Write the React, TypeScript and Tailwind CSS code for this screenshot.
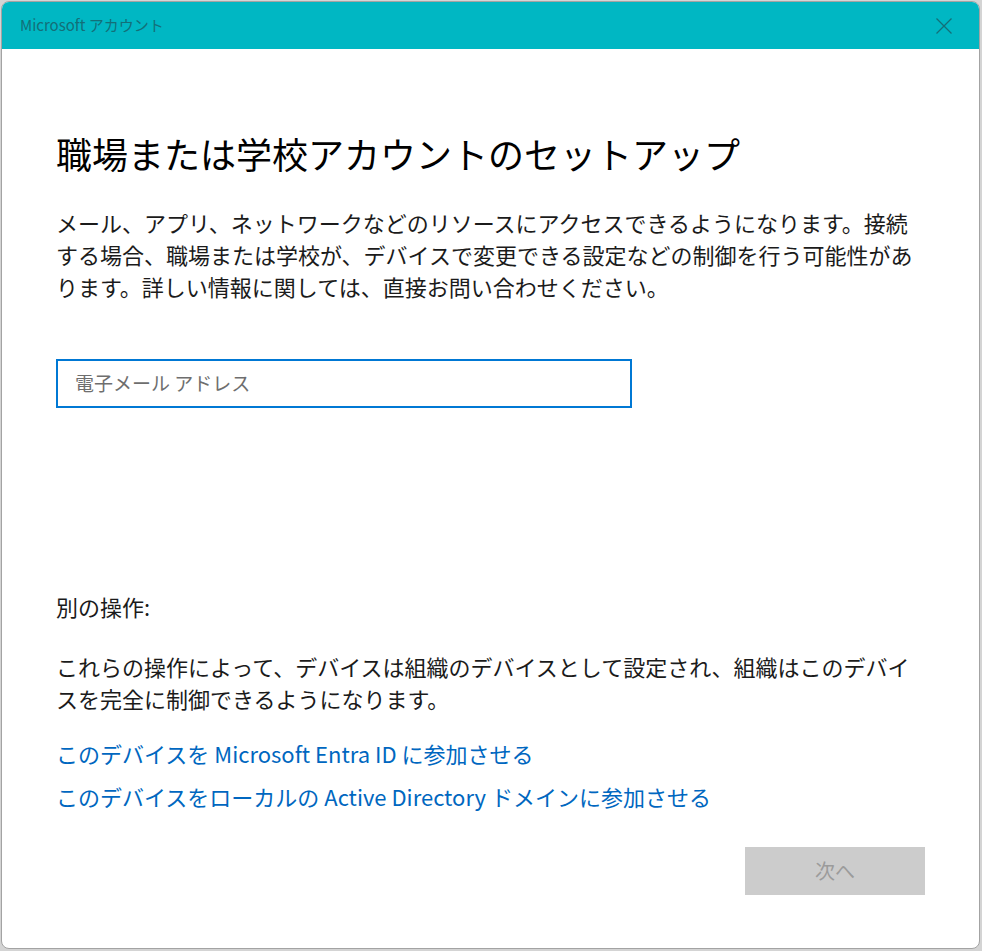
const font = { fontFamily: '"Noto Sans CJK JP", "Noto Sans", sans-serif' };

export default function App() {
  return (
    <div className="flex h-[951px] w-[982px] bg-[#d4d4d4] pb-[2px] pl-[1px] pr-[2px] pt-[1px]" style={font}>
      <div className="flex flex-1 flex-col overflow-hidden rounded-[8px] border border-[#a3a3a3] bg-white">
        <div className="flex h-[47px] shrink-0 items-center justify-between bg-[#00b7c3] pl-[18px] pr-[27px]">
          <span className="text-[15px] text-[#136f78]">Microsoft アカウント</span>
          <svg width="16" height="16" viewBox="0 0 16 16" fill="none" stroke="#136f78" strokeWidth="1.3">
            <path d="M0.5 0.5 L15.5 15.5 M15.5 0.5 L0.5 15.5" />
          </svg>
        </div>

        <div className="flex flex-1 flex-col pl-[54px] pr-[54px]">
          <h1 className="mt-[80px] text-[36px] font-normal leading-[48px] text-black">職場または学校アカウントのセットアップ</h1>
          <p className="mt-[29px] w-[866px] text-[22px] leading-[32px] text-[#1b1b1b]">
            メール、アプリ、ネットワークなどのリソースにアクセスできるようになります。接続する場合、職場または学校が、デバイスで変更できる設定などの制御を行う可能性があります。詳しい情報に関しては、直接お問い合わせください。
          </p>

          <div className="mt-[57px] flex h-[49px] w-[576px] items-center border-2 border-[#0078d4] px-[17px]">
            <span className="text-[19px] text-[#6e6e6e]">電子メール アドレス</span>
          </div>

          <div className="mt-[182px] text-[22px] leading-[32px] text-[#1b1b1b]">別の操作:</div>
          <p className="mt-[28px] w-[866px] text-[22px] leading-[32px] text-[#1b1b1b]">
            これらの操作によって、デバイスは組織のデバイスとして設定され、組織はこのデバイスを完全に制御できるようになります。
          </p>

          <div className="mt-[23px] flex flex-col gap-[11px] text-[22px] leading-[32px] text-[#0067c0]">
            <span>このデバイスを Microsoft Entra ID に参加させる</span>
            <span>このデバイスをローカルの Active Directory ドメインに参加させる</span>
          </div>

          <div className="mt-[35px] flex justify-end">
            <div className="flex h-[48px] w-[180px] items-center justify-center bg-[#cccccc] text-[20px] text-[#9b9b9b]">次へ</div>
          </div>
        </div>
      </div>
    </div>
  );
}
